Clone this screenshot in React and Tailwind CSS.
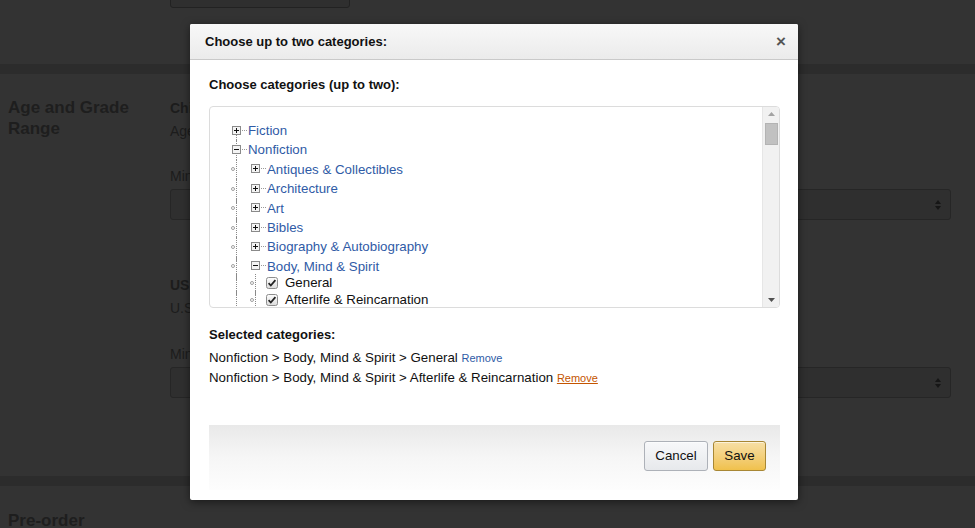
import React from 'react'

const FONT = { fontFamily: '"Liberation Sans", Arial, sans-serif' }

const ROWS = [
  { level: 0, kind: 'plus', label: 'Fiction', first: true },
  { level: 0, kind: 'minus', label: 'Nonfiction' },
  { level: 1, kind: 'plus', label: 'Antiques & Collectibles' },
  { level: 1, kind: 'plus', label: 'Architecture' },
  { level: 1, kind: 'plus', label: 'Art' },
  { level: 1, kind: 'plus', label: 'Bibles' },
  { level: 1, kind: 'plus', label: 'Biography & Autobiography' },
  { level: 1, kind: 'minus', label: 'Body, Mind & Spirit' },
  { level: 2, kind: 'check', label: 'General', checked: true, firstChild: true },
  { level: 2, kind: 'check', label: 'Afterlife & Reincarnation', checked: true }
]

function ToggleBox({ minus }) {
  return (
    <svg width="16" height="10" viewBox="0 0 16 10" className="shrink-0">
      <rect x="0.5" y="0.5" width="8" height="8" fill="#f4f4f4" stroke="#8a8a8a" />
      <path d="M2 4.5h5" stroke="#111" strokeWidth="1" />
      {!minus && <path d="M4.5 2v5" stroke="#111" strokeWidth="1" />}
      <path d="M10 4.5h5" stroke="#999" strokeWidth="1" strokeDasharray="1 1" />
    </svg>
  )
}

function Check({ checked }) {
  return (
    <svg width="12" height="12" viewBox="0 0 12 12" className="shrink-0">
      <defs>
        <linearGradient id="cb" x1="0" y1="0" x2="0" y2="1">
          <stop offset="0" stopColor="#fdfdfd" />
          <stop offset="1" stopColor="#dcdcdc" />
        </linearGradient>
      </defs>
      <rect x="0.5" y="0.5" width="11" height="11" rx="2" fill="url(#cb)" stroke="#8d8d8d" />
      {checked && <path d="M2.6 6.2l2.2 2.3 4.6-5.3" stroke="#222" strokeWidth="1.8" fill="none" />}
    </svg>
  )
}

function Guide({ width, lineLeft, circle }) {
  return (
    <span className="relative shrink-0 self-stretch" style={{ width }}>
      <span className="absolute top-0 -bottom-[4px] border-l border-dotted border-[#8a8a8a]" style={{ left: lineLeft }} />
      {circle && (
        <span className="absolute top-1/2 -mt-[2px] w-[4px] h-[4px] rounded-full border border-[#a0a0a0] bg-white" style={{ left: lineLeft - 5 }} />
      )}
    </span>
  )
}

function TreeRow({ row }) {
  const isCheck = row.kind === 'check'
  return (
    <div className={`flex items-center ${isCheck ? 'h-[17px]' : 'h-[19.4px]'} ${row.firstChild ? '-mt-[2px]' : ''}`}>
      {row.level === 0 && (
        <span className="relative flex items-center self-stretch">
          <span className={`absolute left-[4px] border-l border-dotted border-[#8a8a8a] ${row.first ? 'top-1/2 bottom-0' : 'top-0 bottom-0'}`} />
          <span className="relative"><ToggleBox minus={row.kind === 'minus'} /></span>
        </span>
      )}
      {row.level >= 1 && <Guide width={19} lineLeft={4} circle={row.level === 1} />}
      {row.level === 1 && <ToggleBox minus={row.kind === 'minus'} />}
      {row.level === 2 && <Guide width={15} lineLeft={4} circle />}
      {isCheck && <Check checked={row.checked} />}
      <span
        className={`whitespace-nowrap text-[13.3px] leading-none ${isCheck ? 'ml-[7px] text-[#111]' : 'text-[#2f5ba6]'}`}
      >
        {row.label}
      </span>
    </div>
  )
}

function Scrollbar() {
  return (
    <div className="w-[17px] shrink-0 flex flex-col items-center bg-[#f1f1f1] border-l border-[#e6e6e6]">
      <div className="h-[14px] w-full flex items-center justify-center">
        <svg width="7" height="4" viewBox="0 0 7 4"><path d="M0 4L3.5 0 7 4z" fill="#a3a3a3" /></svg>
      </div>
      <div className="w-[13px] h-[22px] mt-[2px] bg-[#c1c1c1] border border-[#b3b3b3]" />
      <div className="flex-1" />
      <div className="h-[14px] w-full flex items-center justify-center">
        <svg width="7" height="4" viewBox="0 0 7 4"><path d="M0 0L3.5 4 7 0z" fill="#505050" /></svg>
      </div>
    </div>
  )
}

function Button({ children, primary }) {
  return (
    <button
      className={`h-[30px] rounded-[3px] border text-[13.3px] ${
        primary
          ? 'w-[53px] border-[#a88734] bg-gradient-to-b from-[#f7dfa5] to-[#f0c14b] text-[#111]'
          : 'w-[64px] border-[#adb1b8] bg-gradient-to-b from-[#f7f8fa] to-[#e7e9ec] text-[#111]'
      }`}
      style={{ boxShadow: 'inset 0 1px 0 rgba(255,255,255,.6)' }}
    >
      {children}
    </button>
  )
}

function Modal() {
  return (
    <div
      className="absolute left-[190px] top-[24px] w-[608px] h-[476px] bg-white rounded-[2px] flex flex-col overflow-hidden"
      style={{ boxShadow: '0 2px 8px rgba(0,0,0,.5)' }}
    >
      <div className="h-[36px] shrink-0 flex items-center justify-between pl-[15px] pr-[12px] bg-gradient-to-b from-[#f8f8f8] to-[#ebebeb] border-b border-[#c9c9c9]">
        <span className="text-[13px] font-bold text-[#111]">Choose up to two categories:</span>
        <span className="text-[17px] font-bold text-[#555] leading-none">×</span>
      </div>
      <div className="flex-1 flex flex-col pl-[19px] pr-[18px] pt-[17px]">
        <div className="text-[13px] font-bold text-[#111] leading-[16px]">Choose categories (up to two):</div>
        <div className="mt-[13px] h-[202px] flex border border-[#dcdcdc] rounded-[4px] overflow-hidden">
          <div className="flex-1 overflow-hidden pt-[14px] pl-[22px]">
            {ROWS.map(r => <TreeRow key={r.label} row={r} />)}
          </div>
          <Scrollbar />
        </div>
        <div className="mt-[19px] text-[13px] font-bold text-[#111] leading-[16px]">Selected categories:</div>
        <div className="mt-[5px] text-[13.3px] text-[#111] leading-[20px]">
          <div>
            Nonfiction &gt; Body, Mind &amp; Spirit &gt; General{' '}
            <span className="text-[11px] text-[#2f5ba6]">Remove</span>
          </div>
          <div>
            Nonfiction &gt; Body, Mind &amp; Spirit &gt; Afterlife &amp; Reincarnation{' '}
            <span className="text-[11px] text-[#c45500] underline">Remove</span>
          </div>
        </div>
        <div className="flex-1" />
        <div className="h-[65px] mb-[10px] flex items-start justify-end gap-[5px] pt-[16px] pr-[14px] bg-gradient-to-b from-[#e9e9e9] via-[#f6f6f6] to-[#fdfdfd]">
          <Button>Cancel</Button>
          <Button primary>Save</Button>
        </div>
      </div>
    </div>
  )
}

function DarkSelect() {
  return (
    <div className="h-[31px] w-[781px] flex items-center justify-end pr-[9px] rounded-[3px] bg-[#2f2f2f] border border-[#262626]">
      <svg width="6" height="10" viewBox="0 0 6 10"><path d="M0 4L3 0 6 4zM0 6L3 10 6 6z" fill="#161616" /></svg>
    </div>
  )
}

export default function App() {
  return (
    <div className="relative w-[975px] h-[528px] overflow-hidden bg-[#333333] text-[#1c1c1c]" style={FONT}>
      <div className="h-[65px] pl-[170px]">
        <div className="w-[180px] h-[9px] -mt-[1px] rounded-b-[3px] border border-[#222] bg-[#2f2f2f]" />
      </div>
      <div className="h-[10px] bg-[#2c2c2c]" />
      <div className="h-[402px] flex pt-[23px]">
        <div className="w-[170px] pl-[8px] text-[17px] font-bold leading-[21px] text-[#1e1e1e]">
          Age and Grade<br />Range
        </div>
        <div className="flex flex-col text-[14px]">
          <div className="font-bold leading-[18px] mt-[2px]">Children's reading age</div>
          <div className="mt-[5px] leading-[18px]">Age range</div>
          <div className="mt-[27px] leading-[18px]">Minimum</div>
          <div className="mt-[4px]"><DarkSelect /></div>
          <div className="mt-[56px] font-bold leading-[18px]">US grade range</div>
          <div className="mt-[5px] leading-[18px]">U.S. grade</div>
          <div className="mt-[28px] leading-[18px]">Minimum</div>
          <div className="mt-[4px]"><DarkSelect /></div>
        </div>
      </div>
      <div className="h-[10px] bg-[#2c2c2c]" />
      <div className="pl-[8px] pt-[22px] text-[17px] font-bold text-[#1e1e1e]">Pre-order</div>
      <Modal />
    </div>
  )
}
